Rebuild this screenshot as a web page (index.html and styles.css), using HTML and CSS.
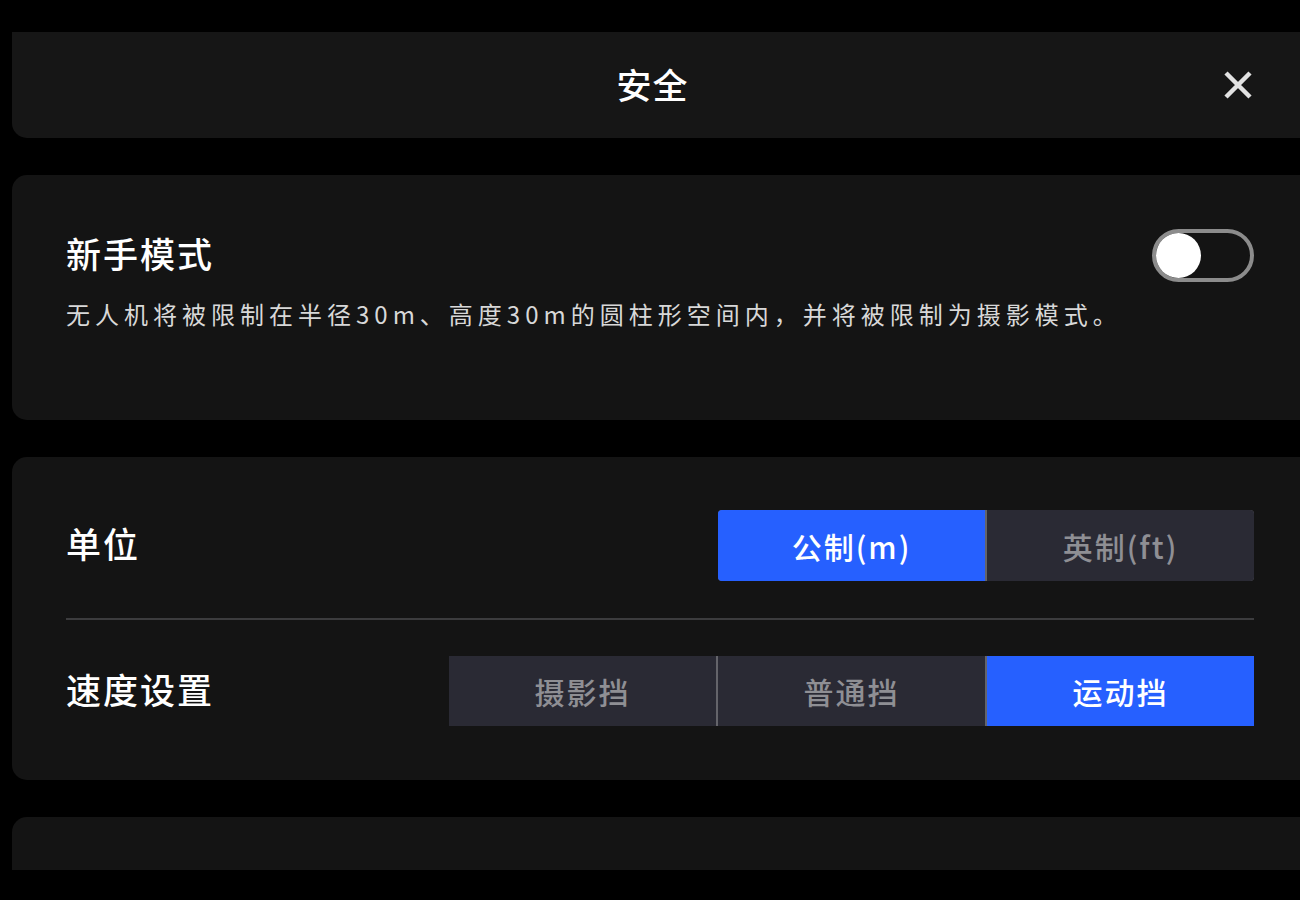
FILE: index.html
```html
<!DOCTYPE html>
<html lang="zh-CN">
<head>
    <meta charset="UTF-8">
    <meta name="viewport" content="width=device-width, initial-scale=1.0">
    <title>安全</title>
    <link rel="stylesheet" href="styles.css">
</head>
<body>
    <div class="screen">
        <header class="topbar">
            <span></span>
            <h1>安全</h1>
            <button class="close" aria-label="关闭">
                <svg width="30" height="30" viewBox="0 0 30 30">
                    <path d="M3 3 L27 27 M27 3 L3 27" stroke="#e2e2e2" stroke-width="4.5" fill="none"/>
                </svg>
            </button>
        </header>

        <section class="card novice">
            <div class="row">
                <h2>新手模式</h2>
                <div class="toggle"><span class="knob"></span></div>
            </div>
            <p class="desc">无人机将被限制在半径30m、高度30m的圆柱形空间内，并将被限制为摄影模式。</p>
        </section>

        <section class="card settings">
            <div class="row">
                <h2>单位</h2>
                <div class="segments">
                    <button class="seg active">公制(m)</button>
                    <button class="seg">英制(ft)</button>
                </div>
            </div>
            <div class="divider"></div>
            <div class="row">
                <h2>速度设置</h2>
                <div class="segments square">
                    <button class="seg">摄影挡</button>
                    <button class="seg">普通挡</button>
                    <button class="seg active">运动挡</button>
                </div>
            </div>
        </section>

        <section class="card empty"></section>
    </div>
</body>
</html>
```

FILE: styles.css
```css
body {
    margin: 0;
    background: #000;
    font-family: "Noto Sans CJK SC", "Noto Sans", sans-serif;
    color: #fff;
}
.screen {
    margin-top: 32px;
    height: 838px;
    overflow: hidden;
    padding-left: 12px;
    display: flex;
    flex-direction: column;
    gap: 37px;
}
.topbar {
    flex: none;
    height: 106px;
    background: #161616;
    border-radius: 0 0 0 15px;
    display: grid;
    grid-template-columns: 1fr auto 1fr;
    align-items: center;
    padding: 0 47px 0 40px;
}
.topbar h1 {
    margin: 0 0 4px;
    font-size: 35px;
    font-weight: 500;
    letter-spacing: 1px;
}
.close {
    justify-self: end;
    background: none;
    border: none;
    padding: 0;
    width: 30px;
    height: 30px;
    display: flex;
}
.card {
    flex: none;
    background: #141414;
    border-radius: 15px 0 0 15px;
    padding: 0 46px 0 54px;
}
.row {
    display: flex;
    align-items: center;
    justify-content: space-between;
}
.row h2 {
    margin: 0 0 5px;
    font-size: 35px;
    line-height: 42px;
    font-weight: 500;
    letter-spacing: 2px;
}
.novice {
    height: 245px;
    padding-top: 54px;
    box-sizing: border-box;
}
.toggle {
    width: 94px;
    height: 45px;
    border: 4px solid #8c8c8c;
    border-radius: 30px;
    display: flex;
    align-items: center;
    padding: 0;
}
.knob {
    width: 45px;
    height: 45px;
    border-radius: 50%;
    background: #fff;
}
.desc {
    margin: 14px 0 0;
    font-size: 24px;
    line-height: 36px;
    letter-spacing: 5px;
    color: #d8d8d8;
}
.settings {
    padding-top: 53px;
    padding-bottom: 54px;
}
.segments {
    display: flex;
    gap: 2px;
    background: #64646a;
    border-radius: 4px;
    overflow: hidden;
}
.segments.square {
    border-radius: 0;
}
.seg {
    width: 267px;
    height: 71px;
    border: none;
    background: #2a2a34;
    color: #8f8f94;
    font-family: inherit;
    font-size: 30px;
    font-weight: 500;
    letter-spacing: 2px;
    padding: 0;
}
.seg.active {
    background: #2660ff;
    color: #fff;
}
.segments.square .seg {
    height: 70px;
}
.divider {
    height: 2px;
    background: #3c3c3e;
    margin: 37px 0 36px;
}
.empty {
    height: 200px;
}
```
